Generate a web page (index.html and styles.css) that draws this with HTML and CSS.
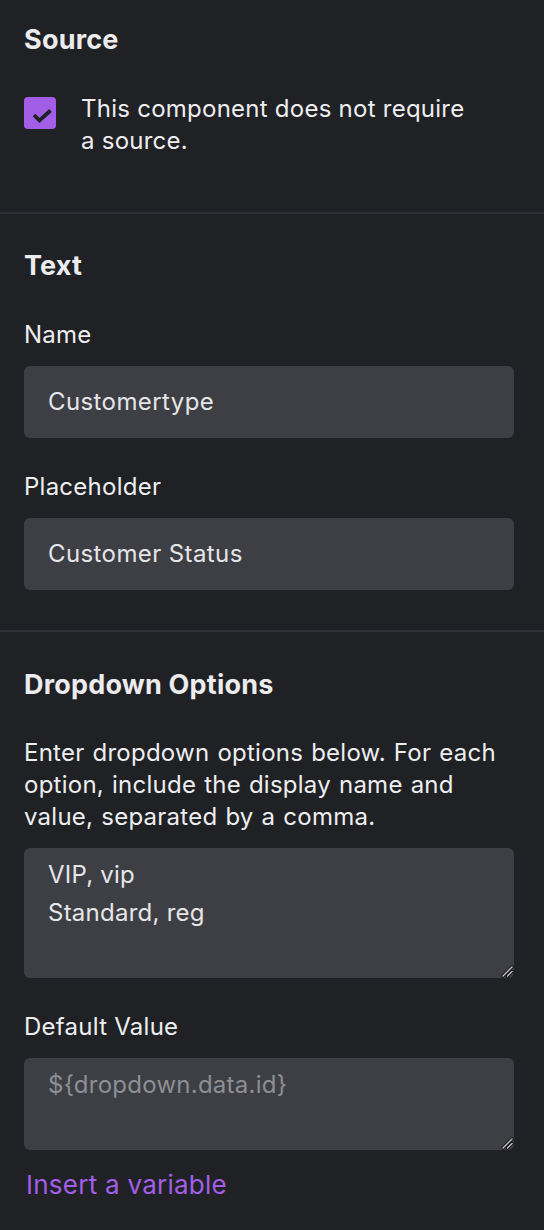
FILE: index.html
```html
<!DOCTYPE html>
<html lang="en">
<head>
<meta charset="utf-8">
<title>Component settings</title>
<link rel="stylesheet" href="styles.css">
</head>
<body>
<div class="panel">
  <section class="section section-first">
    <h2 class="heading">Source</h2>
    <label class="check-row">
      <span class="checkbox">
        <svg width="32" height="32" viewBox="0 0 32 32"><path d="M10 18 L15.5 23.5 L26.5 13.5" fill="none" stroke="#202125" stroke-width="3.8" stroke-linecap="butt" stroke-linejoin="miter"/></svg>
      </span>
      <span class="check-text">This component does not require a source.</span>
    </label>
  </section>

  <section class="section section-mid">
    <h2 class="heading">Text</h2>
    <div class="field">
      <div class="label">Name</div>
      <div class="input">Customertype</div>
    </div>
    <div class="field">
      <div class="label">Placeholder</div>
      <div class="input">Customer Status</div>
    </div>
  </section>

  <section class="section section-last">
    <h2 class="heading">Dropdown Options</h2>
    <p class="help">Enter dropdown options below. For each option, include the display name and value, separated by a comma.</p>
    <div class="field field-tight">
      <div class="area-wrap">
        <textarea class="area" rows="3">VIP, vip
Standard, reg</textarea>
        <svg class="grip" width="14" height="14" viewBox="0 0 14 14"><g stroke-linecap="round"><path d="M12 3 L3 12 M12 7.5 L7.5 12" stroke="#141417" stroke-width="3.2"/><path d="M12 3 L3 12 M12 7.5 L7.5 12" stroke="#c4c4c6" stroke-width="1.4"/></g></svg>
      </div>
    </div>
    <div class="field">
      <div class="label">Default Value</div>
      <div class="area-wrap">
        <textarea class="area" rows="2" placeholder="${dropdown.data.id}"></textarea>
        <svg class="grip" width="14" height="14" viewBox="0 0 14 14"><g stroke-linecap="round"><path d="M12 3 L3 12 M12 7.5 L7.5 12" stroke="#141417" stroke-width="3.2"/><path d="M12 3 L3 12 M12 7.5 L7.5 12" stroke="#c4c4c6" stroke-width="1.4"/></g></svg>
      </div>
    </div>
    <a class="link" href="#">Insert a variable</a>
  </section>
</div>
</body>
</html>
```

FILE: styles.css
```css
* { box-sizing: border-box; }
html, body {
  margin: 0;
  padding: 0;
  background: #202125;
}
body {
  font-family: Inter, "Noto Sans", sans-serif;
  font-size: 24px;
  line-height: 32px;
  letter-spacing: 0.25px;
  color: #eeeef0;
}
.panel {
  display: flex;
  flex-direction: column;
}
.section {
  padding: 36px 30px 40px 24px;
  border-bottom: 2px solid #313237;
  display: flex;
  flex-direction: column;
}
.section-first {
  padding-top: 24px;
  padding-bottom: 55px;
}
.section-last {
  border-bottom: none;
  padding-top: 37px;
}
.heading {
  margin: 0;
  font-size: 27px;
  font-weight: 700;
  line-height: 32px;
  color: #ececee;
  letter-spacing: 0.2px;
}
.check-row {
  display: flex;
  align-items: flex-start;
  margin-top: 37px;
  gap: 25px;
}
.checkbox {
  flex: none;
  width: 32px;
  height: 32px;
  margin-top: 4px;
  border-radius: 4px;
  background: #a35ee8;
  display: flex;
}
.check-text {
  max-width: 400px;
}
.field {
  display: flex;
  flex-direction: column;
  gap: 15px;
  margin-top: 33px;
}
.section-mid .field:first-of-type { margin-top: 37px; }
.field-tight { margin-top: 15px; }
.label {
  line-height: 32px;
}
.input {
  height: 72px;
  border-radius: 6px;
  background: #3e3f44;
  padding: 0 24px;
  display: flex;
  align-items: center;
  color: #e6e6e9;
  letter-spacing: 0.4px;
}
.help {
  margin: 36px 0 0;
  word-spacing: 1px;
}
.area-wrap {
  position: relative;
}
.area {
  display: block;
  width: 100%;
  margin: 0;
  border: none;
  outline: none;
  border-radius: 6px;
  background: #3e3f44;
  color: #e6e6e9;
  font-family: Inter, "Noto Sans", sans-serif;
  font-size: 24px;
  line-height: 38px;
  letter-spacing: 0.25px;
  padding: 8px 24px;
  resize: none;
}
.area::placeholder {
  color: #8e8f94;
}
.grip {
  position: absolute;
  right: 0;
  bottom: 0;
}
.link {
  margin-top: 19px;
  margin-left: 2px;
  font-size: 26px;
  color: #a35ee8;
  text-decoration: none;
  line-height: 32px;
  align-self: flex-start;
}
```
